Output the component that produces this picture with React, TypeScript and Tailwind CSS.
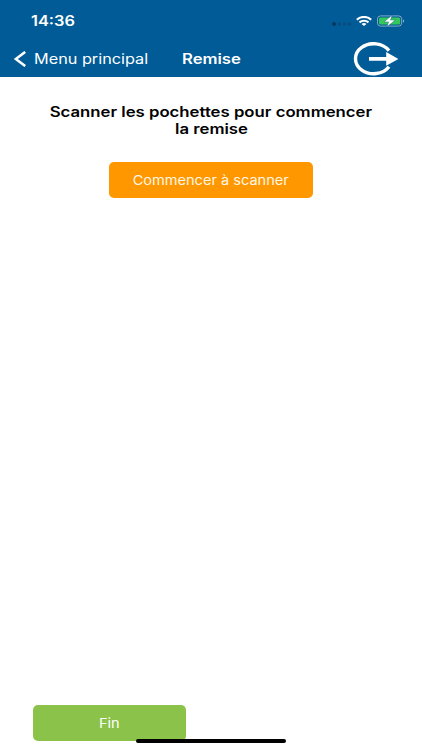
import type { ReactNode } from "react";

/* Wide label: Inter stretched horizontally */
const Wide = ({ className, children }: { className: string; children: ReactNode }) => (
  <span className={`inline-block whitespace-nowrap ${className}`}>{children}</span>
);

const SignalDots = () => (
  <svg className="mt-[6px] h-1 w-5" viewBox="0 0 20 4">
    <rect x="0.3" y="0.2" width="3.6" height="3.6" rx="1" fill="#033760" />
    <rect x="6" y="0.6" width="3" height="3" rx="1" fill="#0a4a7c" />
    <rect x="11" y="0.6" width="3" height="3" rx="1" fill="#0a4a7c" />
    <rect x="16" y="0.6" width="3" height="3" rx="1" fill="#0a4a7c" />
  </svg>
);

const Wifi = () => (
  <svg className="ml-1 h-[10px] w-4" viewBox="0 0 16 10" fill="none" stroke="#fff" strokeWidth="2.1">
    <path d="M0.8 3.7C4.8 0 11.2 0 15.2 3.7" />
    <path d="M3.5 6.4C6 4.2 10 4.2 12.5 6.4" />
    <path d="M8 10L5.5 7.9C6.9 6.7 9.1 6.7 10.5 7.9Z" fill="#fff" stroke="none" />
  </svg>
);

const Battery = () => (
  <svg className="ml-[5px] h-3 w-7" viewBox="0 0 28 12">
    <rect x="0.5" y="0.9" width="24.2" height="10.2" rx="3" fill="none" stroke="#8fb2cf" strokeWidth="0.9" />
    <rect x="2" y="2.4" width="21.2" height="7.2" rx="1.6" fill="#35c759" />
    <path d="M26 4.3C27.5 4.8 27.5 7.2 26 7.7Z" fill="#8fb2cf" />
    <path d="M15 0.2L7 6.9H11.6L10 11.8L18.2 5.1H13.5Z" fill="#fff" stroke="#075b96" strokeWidth="0.4" />
  </svg>
);

const LogoutIcon = () => (
  <svg className="h-[35px] w-[46px]" viewBox="0 0 46 35">
    <path d="M36 8.6A18.2 15 0 1 0 36 24.8" fill="none" stroke="#fff" strokeWidth="3.4" />
    <path d="M16 15.1H33.2V10L45.4 16.9L33.2 23.8V18.7H16Z" fill="#fff" />
  </svg>
);

const App = () => (
  <div className="flex h-[750px] w-[422px] flex-col overflow-hidden bg-white font-['Inter','Liberation_Sans',sans-serif]">
    <header className="h-[77px] shrink-0 bg-[#005b96] text-white">
      {/* Status bar */}
      <div className="flex h-[41px] items-center pl-[31px] pr-[17px]">
        <Wide className="origin-left scale-x-[1.17] text-[14px] leading-5 font-semibold">14:36</Wide>
        <div className="ml-auto flex items-center">
          <SignalDots />
          <Wifi />
          <Battery />
        </div>
      </div>

      {/* Navigation bar */}
      <div className="flex h-9 items-center pr-[23px] pl-[13px]">
        <button className="flex w-[169px] items-center">
          <svg className="h-4 w-[13px]" viewBox="0 0 13 16" fill="none" stroke="#fff" strokeWidth="2.5">
            <path d="M12.2 0.9L2.8 8L12.2 15.1" />
          </svg>
          <Wide className="ml-2 origin-left scale-x-[1.16] text-[14px] leading-5">Menu principal</Wide>
        </button>
        <h1 className="text-[14px] leading-5 font-semibold">
          <Wide className="origin-left scale-x-[1.19]">Remise</Wide>
        </h1>
        <button className="ml-auto">
          <LogoutIcon />
        </button>
      </div>
    </header>

    <main className="flex flex-1 flex-col items-center">
      <p className="mt-[26px] flex flex-col items-center text-[14px] leading-[17px] font-semibold text-black">
        <Wide className="scale-x-[1.195]">Scanner les pochettes pour commencer</Wide>
        <Wide className="scale-x-[1.195]">la remise</Wide>
      </p>
      <button className="mt-[25px] h-9 w-[204px] rounded-[5px] bg-[#ff9800] pt-0.5 text-[13px] text-[#fff6e5]">
        <Wide className="scale-x-[1.12]">Commencer à scanner</Wide>
      </button>
    </main>

    <footer className="relative h-[45px] shrink-0 pl-[33px]">
      <button className="h-9 w-[153px] rounded-[5px] bg-[#8bc34a] pt-0.5 text-[13px] text-white">
        <Wide className="scale-x-[1.12]">Fin</Wide>
      </button>
      {/* Home indicator */}
      <div className="absolute top-[34px] left-[136px] h-1 w-[150px] rounded-full bg-black" />
    </footer>
  </div>
);

export default App;
